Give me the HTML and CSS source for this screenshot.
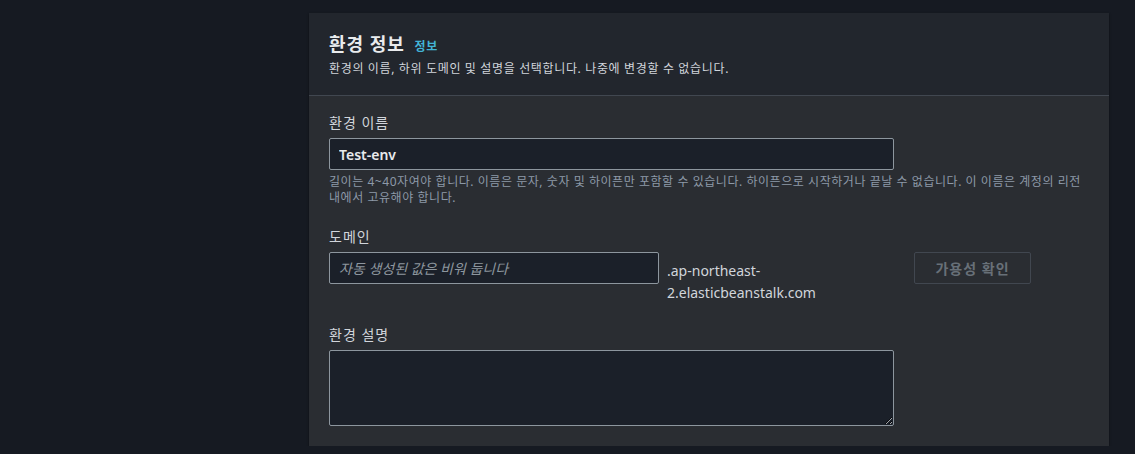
FILE: index.html
```html
<!DOCTYPE html>
<html>
<head>
  <title>환경 정보</title>
  <link rel="stylesheet" href="styles.css">
</head>
<body>
  <div class="panel">
    <div class="panel-header">
      <h2>환경 정보 <a href="#" class="info-link">정보</a></h2>
      <p class="desc">환경의 이름, 하위 도메인 및 설명을 선택합니다. 나중에 변경할 수 없습니다.</p>
    </div>
    <div class="panel-body">
      <div class="field">
        <label for="envName">환경 이름</label>
        <input type="text" id="envName" class="wide" value="Test-env">
        <p class="hint">길이는 4~40자여야 합니다. 이름은 문자, 숫자 및 하이픈만 포함할 수 있습니다. 하이픈으로 시작하거나 끝날 수 없습니다. 이 이름은 계정의 리전 내에서 고유해야 합니다.</p>
      </div>

      <div class="field">
        <label for="domain">도메인</label>
        <div class="domain-row">
          <input type="text" id="domain" class="short" placeholder="자동 생성된 값은 비워 둡니다">
          <span class="suffix">.ap-northeast-<br>2.elasticbeanstalk.com</span>
          <button type="button" class="check-btn" disabled>가용성 확인</button>
        </div>
      </div>

      <div class="field">
        <label for="envDesc">환경 설명</label>
        <textarea id="envDesc" class="wide"></textarea>
      </div>
    </div>
  </div>
</body>
</html>
```

FILE: styles.css
```css
body {
  background: #161a22;
  font-family: "Noto Sans", "Noto Sans CJK KR", sans-serif;
  color: #d1d5db;
  margin: 0;
  padding: 13px 0 0 309px;
  word-break: keep-all;
}

.panel {
  width: 800px;
  background: #2a2d32;
  box-shadow: 0 1px 2px rgba(0, 0, 0, 0.5);
}

.panel-header {
  background: #22262d;
  padding: 19px 20px 18px;
  border-bottom: 1px solid #414750;
}

h2 {
  margin: 0;
  font-size: 18px;
  font-weight: bold;
  color: #e9ebed;
  line-height: 24px;
  letter-spacing: 1px;
}

.info-link {
  color: #42b4d6;
  font-size: 12px;
  font-weight: bold;
  text-decoration: none;
  margin-left: 4px;
  letter-spacing: 0.5px;
}

.desc {
  margin: 2px 0 0;
  font-size: 12px;
  line-height: 16px;
  color: #d1d5db;
  letter-spacing: 0.65px;
}

.panel-body {
  padding: 18px 20px 20px;
}

.field {
  margin-bottom: 22px;
}

.field:last-child {
  margin-bottom: 0;
}

label {
  display: block;
  font-size: 14px;
  line-height: 18px;
  color: #d1d5db;
  margin-bottom: 6px;
  letter-spacing: 1px;
}

input[type="text"], textarea {
  box-sizing: border-box;
  background: #1b2029;
  border: 1px solid #8d969e;
  border-radius: 2px;
  color: #e9ebed;
  font-family: inherit;
  font-size: 14px;
  padding: 4px 9px;
  margin: 0;
  display: block;
}

input[type="text"] {
  height: 32px;
  font-weight: 600;
}

input::placeholder {
  color: #8d969e;
  font-style: italic;
  font-weight: normal;
}

.wide {
  width: 565px;
}

.short {
  width: 330px;
}

textarea {
  height: 76px;
  resize: vertical;
}

.hint {
  margin: 4px 0 0;
  font-size: 12px;
  line-height: 16px;
  color: #8d99a8;
  letter-spacing: 0.55px;
}

.domain-row {
  display: flex;
  align-items: flex-start;
}

.suffix {
  font-size: 14px;
  line-height: 22px;
  color: #d1d5db;
  margin: 8px 0 0 8px;
  width: 247px;
}

.check-btn {
  background: transparent;
  border: 1px solid #414750;
  border-radius: 2px;
  color: #687078;
  font-family: inherit;
  font-size: 14px;
  font-weight: 600;
  height: 32px;
  width: 117px;
  padding: 0;
  letter-spacing: 1px;
}
```
